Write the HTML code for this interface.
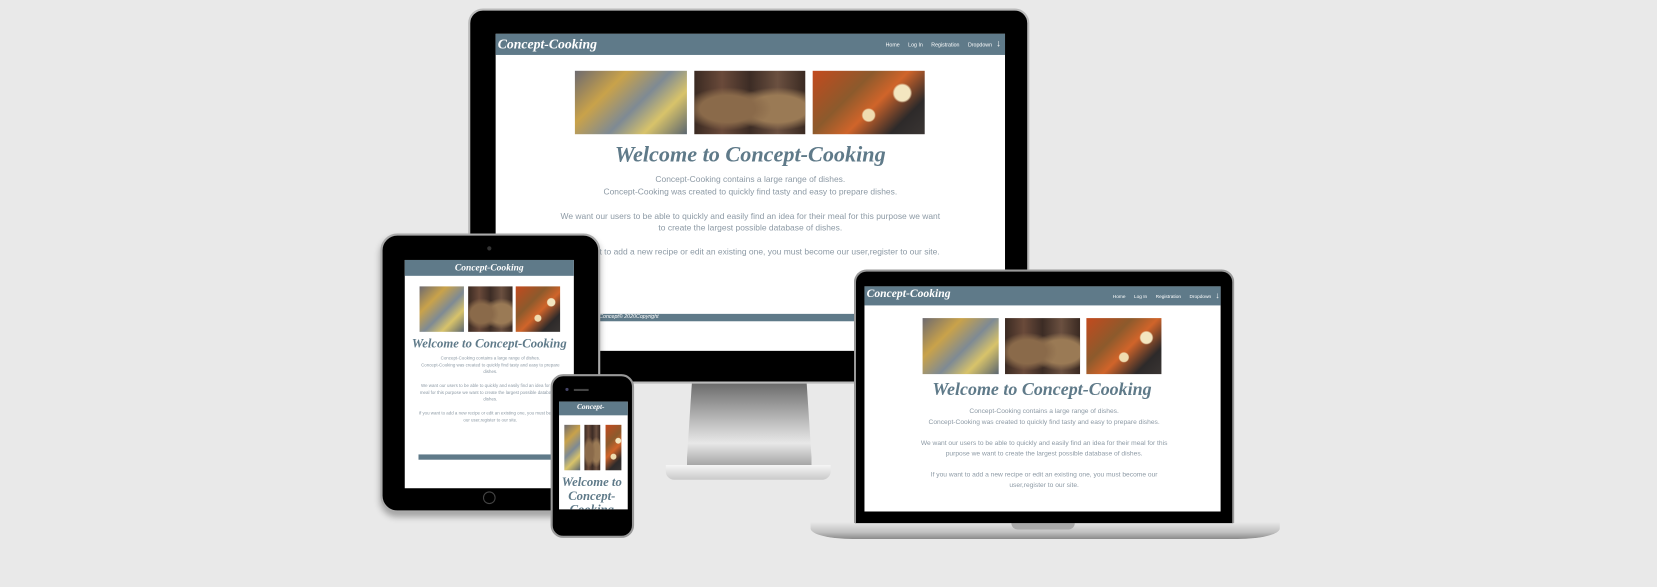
<!DOCTYPE html>
<html><head><meta charset="utf-8"><style>
*{margin:0;padding:0;box-sizing:border-box}
body{width:1657px;height:586px;background:#e9e9e9;position:relative;overflow:hidden;font-family:"Liberation Sans",sans-serif}
#w{position:absolute;left:0;top:0;width:1568px;height:555px;transform:scale(1.0568);transform-origin:0 0}
.a{position:absolute}
.nav{background:#5f7a89;color:#fff}
.logo{font-family:"Liberation Serif",serif;font-style:italic;font-weight:bold;color:#fff;white-space:nowrap}
.t{font-family:"Liberation Serif",serif;font-style:italic;font-weight:bold;color:#5f7a89;text-align:center;white-space:nowrap}
.p{color:#8d9aa5;text-align:center}
.links{font-size:5px;color:#fff;white-space:nowrap}
.links span{margin-right:8px}
.f1{background:linear-gradient(135deg,#6d6a70 0%,#c9a24a 30%,#7e8a94 55%,#d8c36a 75%,#5b6670 100%)}
.f2{background:radial-gradient(ellipse at 30% 60%,#8a6a4a 0 25%,transparent 40%),radial-gradient(ellipse at 75% 60%,#9a7a55 0 25%,transparent 40%),linear-gradient(90deg,#3a2a22,#6a4a3a,#3c2c25,#6b5040,#3a2a22)}
.f3{background:radial-gradient(circle at 80% 35%,#f3e6c0 0 8%,transparent 10%),radial-gradient(circle at 50% 70%,#f0dcb0 0 8%,transparent 10%),linear-gradient(135deg,#c34a1e,#8c5a2c 35%,#d0642a 55%,#2d2a2a 80%,#3a3533)}
</style></head><body><div id="w">

<!-- monitor stand -->
<div class="a" style="left:650px;top:362px;width:118px;height:82px;background:linear-gradient(#6a6a6a,#bdbdbd 45%,#e8e8e8 70%,#9a9a9a);clip-path:polygon(4% 0,96% 0,100% 88%,100% 100%,0 100%,0 88%)"></div>
<div class="a" style="left:630px;top:440px;width:156px;height:14px;background:linear-gradient(#f5f5f5,#c9c9c9);border-radius:0 0 8px 8px"></div>

<!-- monitor -->
<div class="a" style="left:443px;top:8px;width:531px;height:355px;background:#000;border-radius:14px 14px 2px 2px;border:2px solid #bbb"></div>
<div class="a" style="left:469px;top:32px;width:482px;height:300px;background:#fff"></div>
<div class="a nav" style="left:469px;top:32px;width:482px;height:20px"></div>
<div class="a logo" style="left:471px;top:34px;font-size:13px">Concept-Cooking</div>
<div class="a links" style="left:838px;top:39px"><span>Home</span><span>Log In</span><span>Registration</span><span style="margin-right:4px">Dropdown</span><b style="font-size:9px;line-height:5px">↓</b></div>
<div class="a f1" style="left:544px;top:67px;width:106px;height:60px"></div>
<div class="a f2" style="left:657px;top:67px;width:105px;height:60px"></div>
<div class="a f3" style="left:769px;top:67px;width:106px;height:60px"></div>
<div class="a t" style="left:560px;top:134px;width:300px;font-size:21px">Welcome to Concept-Cooking</div>
<div class="a p" style="left:530px;top:164px;width:360px;font-size:8px;line-height:11.5px">Concept-Cooking contains a large range of dishes.<br>Concept-Cooking was created to quickly find tasty and easy to prepare dishes.<br><br>We want our users to be able to quickly and easily find an idea for their meal for this purpose we want to create the largest possible database of dishes.<br><br>If you want to add a new recipe or edit an existing one, you must become our user,register to our site.</div>
<div class="a nav" style="left:469px;top:297px;width:482px;height:7px"></div>
<div class="a" style="left:567px;top:297px;font-size:5px;color:#fff;font-style:italic">Concept© 2020Copyright</div>

<!-- tablet -->
<div class="a" style="left:360px;top:221px;width:208px;height:264px;background:#000;border-radius:16px;border:2px solid #aaa;box-shadow:0 4px 6px rgba(0,0,0,.3)"></div>
<div class="a" style="left:461px;top:233px;width:4px;height:4px;border-radius:50%;background:#333"></div>
<div class="a" style="left:457px;top:465px;width:12px;height:12px;border-radius:50%;border:1px solid #444"></div>
<div class="a" style="left:383px;top:246px;width:160px;height:216px;background:#fff"></div>
<div class="a nav" style="left:383px;top:246px;width:160px;height:15px"></div>
<div class="a logo" style="left:383px;top:248px;width:160px;text-align:center;font-size:9px">Concept-Cooking</div>
<div class="a f1" style="left:397px;top:271px;width:42px;height:43px"></div>
<div class="a f2" style="left:443px;top:271px;width:42px;height:43px"></div>
<div class="a f3" style="left:488px;top:271px;width:42px;height:43px"></div>
<div class="a t" style="left:383px;top:318px;width:160px;font-size:12px">Welcome to Concept-Cooking</div>
<div class="a p" style="left:396px;top:336px;width:136px;font-size:4.2px;line-height:6.5px">Concept-Cooking contains a large range of dishes.<br>Concept-Cooking was created to quickly find tasty and easy to prepare dishes.<br><br>We want our users to be able to quickly and easily find an idea for their meal for this purpose we want to create the largest possible database of dishes.<br><br>If you want to add a new recipe or edit an existing one, you must become our user,register to our site.</div>
<div class="a nav" style="left:396px;top:430px;width:130px;height:5px"></div>

<!-- phone -->
<div class="a" style="left:521px;top:354px;width:79px;height:155px;background:#000;border-radius:12px;border:2px solid #999"></div>
<div class="a" style="left:535px;top:367px;width:3px;height:3px;border-radius:50%;background:#446"></div>
<div class="a" style="left:543px;top:368px;width:14px;height:2px;background:#444"></div>
<div class="a" style="left:529px;top:380px;width:65px;height:102px;background:#fff"></div>
<div class="a nav" style="left:529px;top:380px;width:65px;height:13px"></div>
<div class="a logo" style="left:529px;top:381px;width:60px;text-align:center;font-size:7px">Concept-</div>
<div class="a f1" style="left:534px;top:402px;width:15px;height:43px"></div>
<div class="a f2" style="left:553px;top:402px;width:15px;height:43px"></div>
<div class="a f3" style="left:573px;top:402px;width:15px;height:43px"></div>
<div class="a t" style="left:529px;top:450px;width:62px;font-size:12px;line-height:13px;white-space:normal;height:32px;overflow:hidden">Welcome to Concept-Cooking</div>

<!-- laptop -->
<div class="a" style="left:767px;top:494px;width:444px;height:16px;background:linear-gradient(#e9e9e9,#c0c0c0 60%,#8a8a8a);border-radius:0 0 40px 40px / 0 0 10px 10px"></div>
<div class="a" style="left:957px;top:495px;width:60px;height:6px;background:#aaa;border-radius:0 0 6px 6px"></div>
<div class="a" style="left:808px;top:255px;width:360px;height:240px;background:#000;border-radius:12px 12px 0 0;border:2px solid #999;border-bottom:none"></div>
<div class="a" style="left:818px;top:271px;width:337px;height:213px;background:#fff"></div>
<div class="a nav" style="left:818px;top:271px;width:337px;height:18px"></div>
<div class="a logo" style="left:820px;top:272px;font-size:11px">Concept-Cooking</div>
<div class="a links" style="left:1053px;top:277px;font-size:4.5px"><span>Home</span><span>Log In</span><span>Registration</span><span style="margin-right:4px">Dropdown</span><b style="font-size:8px;line-height:5px">↓</b></div>
<div class="a f1" style="left:873px;top:301px;width:72px;height:53px"></div>
<div class="a f2" style="left:951px;top:301px;width:71px;height:53px"></div>
<div class="a f3" style="left:1028px;top:301px;width:71px;height:53px"></div>
<div class="a t" style="left:836px;top:359px;width:300px;font-size:17px">Welcome to Concept-Cooking</div>
<div class="a p" style="left:868px;top:385px;width:240px;font-size:6.3px;line-height:10px">Concept-Cooking contains a large range of dishes.<br>Concept-Cooking was created to quickly find tasty and easy to prepare dishes.<br><br>We want our users to be able to quickly and easily find an idea for their meal for this purpose we want to create the largest possible database of dishes.<br><br>If you want to add a new recipe or edit an existing one, you must become our user,register to our site.</div>

</div></body></html>
